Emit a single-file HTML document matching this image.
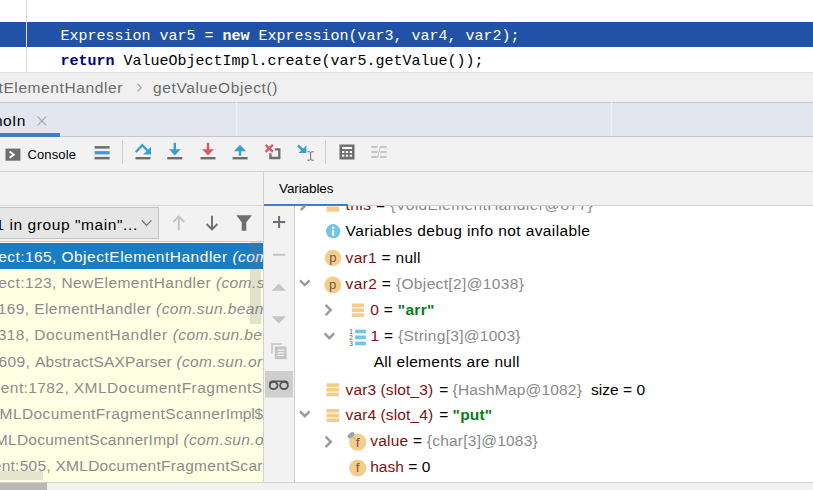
<!DOCTYPE html>
<html><head><meta charset="utf-8">
<style>
html,body{margin:0;padding:0;}
body{width:813px;height:490px;overflow:hidden;position:relative;background:#f2f2f2;font-family:"Liberation Sans",sans-serif;font-size:15.5px;letter-spacing:0.39px;color:#000;}
.abs{position:absolute;}
.t{position:absolute;white-space:pre;line-height:20px;}
.mono{font-family:"Liberation Mono",monospace;font-size:15px;letter-spacing:0;}
.row{position:absolute;left:0;width:263px;height:26px;overflow:hidden;}
.n{color:#801010;}
.g{color:#8a8a8a;}
.s{color:#067d17;font-weight:bold;}
</style></head><body>
<!-- editor -->
<div class="abs" id="editor" style="left:0;top:0;width:813px;height:72px;background:#fff;"></div>
<div class="abs" style="left:26px;top:0;width:1px;height:72px;background:#d9d9d9;"></div>
<div class="abs" id="hl" style="left:0;top:22px;width:813px;height:25px;background:#2252a7;"></div>
<div class="abs" style="left:26px;top:22px;width:1px;height:25px;background:#dcdcdc;"></div>
<div class="t mono" style="left:60.5px;top:27px;color:#fff;">Expression var5 = <b>new</b> Expression(var3, var4, var2);</div>
<div class="t mono" style="left:60.5px;top:52px;color:#000;"><b style="color:#000080">return</b> ValueObjectImpl.create(var5.getValue());</div>
<!-- breadcrumb -->
<div class="abs" style="left:0;top:72px;width:813px;height:30px;background:#f0f0f0;border-top:1px solid #e4e4e4;box-sizing:border-box;"></div>
<div class="t" style="left:-1.5px;top:78px;color:#6a6a6a;letter-spacing:0.6px;">tElementHandler</div>
<div class="t" style="left:153px;top:78px;color:#6a6a6a;letter-spacing:0.62px;">getValueObject()</div>
<!-- tab bar -->
<div class="abs" style="left:0;top:102px;width:813px;height:35px;background:#e3e6ee;border-top:1px solid #c8c8c8;border-bottom:1px solid #c8c8c8;box-sizing:border-box;"></div>
<div class="abs" style="left:236px;top:102px;width:1px;height:34px;background:#f0f0f2;"></div>
<div class="abs" style="left:611px;top:102px;width:1px;height:34px;background:#f0f0f2;"></div>
<div class="t" style="left:-6px;top:111px;color:#000;">noIn</div>
<div class="abs" style="left:0;top:133px;width:60px;height:4px;background:#3e7dc8;"></div>
<!-- toolbar -->
<div class="abs" style="left:0;top:137px;width:813px;height:35px;background:#f2f2f2;border-bottom:1px solid #d1d1d1;box-sizing:border-box;"></div>
<div class="t" style="left:27.4px;top:145px;font-size:13px;letter-spacing:0.15px;">Console</div>
<!-- sub header -->
<div class="abs" style="left:0;top:172px;width:813px;height:34px;background:#f2f2f2;"></div>
<div class="abs" style="left:263px;top:172px;width:1px;height:310px;background:#d1d1d1;"></div>
<div class="t" style="left:279px;top:178.5px;font-size:13.5px;letter-spacing:-0.1px;">Variables</div>
<div class="abs" style="left:264px;top:205px;width:549px;height:1px;background:#d1d1d1;"></div>
<div class="abs" style="left:264px;top:204px;width:84px;height:2px;background:#3e7dc8;"></div>
<div class="abs" style="left:0;top:205px;width:263px;height:1px;background:#d8d8d8;"></div>
<!-- frames panel -->
<div class="abs" style="left:-5px;top:207px;width:164px;height:32px;border:1px solid #c4c4c4;background:#e6e6e6;box-sizing:border-box;"></div>
<div class="t" style="left:-4.6px;top:215px;letter-spacing:0.58px;">1 in group "main"...</div>
<div class="abs" style="left:0;top:241px;width:263px;height:1px;background:#cacaca;"></div>
<div class="abs" style="left:0;top:242px;width:263px;height:1px;background:#fafafa;"></div>
<div class="abs" style="left:0;top:243px;width:263px;height:239px;background:#ffffe4;"></div>
<div class="abs" style="left:0;top:243px;width:263px;height:26px;background:#1a7dc4;"></div>
<div class="abs" id="frames" style="left:0;top:242px;width:263px;height:240px;overflow:hidden;">
<div class="abs" style="left:0;top:5px;width:400px;height:20px;color:#fff;"><span class="t" style="left:-1.67px;top:0;letter-spacing:0.400px;">ect:165, </span><span class="t" style="left:61.40px;top:0;letter-spacing:0.517px;">ObjectElementHandler </span><span class="t" style="left:232.50px;top:0;letter-spacing:0.400px;font-style:italic">(com</span></div>
<div class="abs" style="left:0;top:31px;width:400px;height:20px;color:#8c8c8c;"><span class="t" style="left:-1.67px;top:0;letter-spacing:0.400px;">ect:123, </span><span class="t" style="left:61.40px;top:0;letter-spacing:0.446px;">NewElementHandler </span><span class="t" style="left:215.90px;top:0;letter-spacing:0.400px;font-style:italic">(com.s</span></div>
<div class="abs" style="left:0;top:57px;width:400px;height:20px;color:#8c8c8c;"><span class="t" style="left:-2.28px;top:0;letter-spacing:0.400px;">169, </span><span class="t" style="left:34.20px;top:0;letter-spacing:0.430px;">ElementHandler </span><span class="t" style="left:156.10px;top:0;letter-spacing:0.400px;font-style:italic">(com.sun.beans</span></div>
<div class="abs" style="left:0;top:83px;width:400px;height:20px;color:#8c8c8c;"><span class="t" style="left:-2.28px;top:0;letter-spacing:0.400px;">318, </span><span class="t" style="left:34.20px;top:0;letter-spacing:0.580px;">DocumentHandler </span><span class="t" style="left:172.70px;top:0;letter-spacing:0.400px;font-style:italic">(com.sun.bea</span></div>
<div class="abs" style="left:0;top:110px;width:400px;height:20px;color:#8c8c8c;"><span class="t" style="left:-1.48px;top:0;letter-spacing:0.400px;">609, </span><span class="t" style="left:35.00px;top:0;letter-spacing:0.200px;">AbstractSAXParser </span><span class="t" style="left:176.40px;top:0;letter-spacing:0.400px;font-style:italic">(com.sun.org</span></div>
<div class="abs" style="left:0;top:136px;width:400px;height:20px;color:#8c8c8c;"><span class="t" style="left:0.85px;top:0;letter-spacing:0.400px;">ent:1782, </span><span class="t" style="left:73.80px;top:0;letter-spacing:0.485px;">XMLDocumentFragmentS</span></div>
<div class="abs" style="left:0;top:162px;width:400px;height:20px;color:#8c8c8c;"><span class="t" style="left:-0.40px;top:0;letter-spacing:0.400px;">M</span><span class="t" style="left:12.90px;top:0;letter-spacing:0.400px;">LDocumentFragmentScanner</span><span class="t" style="left:225.80px;top:0;letter-spacing:-0.120px;">Impl</span><span class="t" style="left:254.60px;top:0;letter-spacing:0.000px;">$</span></div>
<div class="abs" style="left:0;top:188px;width:400px;height:20px;color:#8c8c8c;"><span class="t" style="left:-5.20px;top:0;letter-spacing:0.400px;">M</span><span class="t" style="left:8.10px;top:0;letter-spacing:0.220px;">LDocumentScannerImpl </span><span class="t" style="left:183.40px;top:0;letter-spacing:0.400px;font-style:italic">(com.sun.o</span></div>
<div class="abs" style="left:0;top:214px;width:400px;height:20px;color:#8c8c8c;"><span class="t" style="left:-7.20px;top:0;letter-spacing:0.250px;">ent:505, </span><span class="t" style="left:55.40px;top:0;letter-spacing:0.290px;">XMLDocumentFragmentScar</span></div>
</div>
<div class="abs" style="left:250px;top:242px;width:11px;height:82px;background:rgba(120,120,120,0.22);"></div>
<div class="abs" style="left:0;top:471px;width:43px;height:9px;background:rgba(120,120,120,0.2);"></div>
<!-- vertical toolbar -->
<div class="abs" style="left:264px;top:206px;width:30px;height:276px;background:#f2f2f2;"></div>
<div class="abs" style="left:294px;top:206px;width:1px;height:276px;background:#d1d1d1;"></div>
<!-- variables -->
<div class="abs" style="left:295px;top:206px;width:518px;height:276px;background:#fff;"></div>
<div class="abs" style="left:295px;top:206px;width:518px;height:14px;overflow:hidden;"><div class="t" style="left:50.6px;top:-11px;letter-spacing:0.4px;"><span class="n">this</span> = <span class="g">{VoidElementHandler@877}</span></div></div>
<div class="abs" style="left:0;top:221px;width:813px;height:20px;"><span class="t" style="left:345.60px;top:0;letter-spacing:0.390px;">Variables debug info not available</span></div>
<div class="abs" style="left:0;top:248px;width:813px;height:20px;"><span class="t" style="left:345.60px;top:0;letter-spacing:0.300px;"><span class="n">var1</span> = null</span></div>
<div class="abs" style="left:0;top:274px;width:813px;height:20px;"><span class="t" style="left:345.60px;top:0;letter-spacing:0.356px;"><span class="n">var2</span> = <span class="g">{Object[2]@1038}</span></span></div>
<div class="abs" style="left:0;top:300px;width:813px;height:20px;"><span class="t" style="left:370.20px;top:0;letter-spacing:0.310px;"><span class="n">0</span> = <span class="s">"arr"</span></span></div>
<div class="abs" style="left:0;top:326px;width:813px;height:20px;"><span class="t" style="left:370.60px;top:0;letter-spacing:0.280px;"><span class="n">1</span> = <span class="g">{String[3]@1003}</span></span></div>
<div class="abs" style="left:0;top:352px;width:813px;height:20px;"><span class="t" style="left:373.70px;top:0;letter-spacing:0.310px;">All elements are null</span></div>
<div class="abs" style="left:0;top:380px;width:813px;height:20px;"><span class="t n" style="left:345.60px;top:0;letter-spacing:0.110px;">var3 (slot_3)</span><span class="t" style="left:439.20px;top:0;letter-spacing:0.000px;">=</span><span class="t g" style="left:452.60px;top:0;letter-spacing:0.180px;">{HashMap@1082}</span><span class="t" style="left:591.00px;top:0;letter-spacing:0.030px;">size = 0</span></div>
<div class="abs" style="left:0;top:405px;width:813px;height:20px;"><span class="t n" style="left:345.60px;top:0;letter-spacing:0.110px;">var4 (slot_4)</span><span class="t" style="left:439.20px;top:0;letter-spacing:0.000px;">=</span><span class="t s" style="left:452.60px;top:0;letter-spacing:0.200px;">"put"</span></div>
<div class="abs" style="left:0;top:431px;width:813px;height:20px;"><span class="t" style="left:370.20px;top:0;letter-spacing:0.230px;"><span class="n">value</span> = <span class="g">{char[3]@1083}</span></span></div>
<div class="abs" style="left:0;top:457px;width:813px;height:20px;"><span class="t" style="left:370.20px;top:0;letter-spacing:0.050px;"><span class="n">hash</span> = 0</span></div>

<!-- icons overlay -->
<svg class="abs" style="left:0;top:0;pointer-events:none" width="813" height="490" viewBox="0 0 813 490">
<!-- breadcrumb chevron -->
<polyline points="137.6,83.8 141.2,87.6 137.6,91.4" fill="none" stroke="#9c9c9c" stroke-width="1.2"/>
<!-- tab close -->
<path d="M37.6 116.7 L46.2 125.3 M46.2 116.7 L37.6 125.3" stroke="#a0a3a9" stroke-width="1.1" fill="none"/>
<!-- console icon -->
<rect x="5.5" y="148.6" width="14.9" height="12.1" fill="#6e6e6e"/>
<polyline points="9.6,151.6 13.7,154.7 9.6,157.8" fill="none" stroke="#fff" stroke-width="1.9"/>
<!-- hamburger -->
<rect x="94.6" y="146.1" width="15" height="2.5" fill="#6e6e6e"/>
<rect x="94.6" y="151.1" width="15" height="3.3" fill="#389fd6"/>
<rect x="94.6" y="156.9" width="15" height="2.5" fill="#6e6e6e"/>
<!-- separators -->
<rect x="122" y="140" width="1" height="24" fill="#cfcfcf"/>
<rect x="325" y="140" width="1" height="24" fill="#cfcfcf"/>
<!-- step over -->
<rect x="135.5" y="157" width="15" height="2.4" fill="#6e6e6e"/>
<polyline points="135.8,152 142.3,145.2 147.5,150.6" fill="none" stroke="#389fd6" stroke-width="2.3"/>
<polygon points="151,146.8 151,154.5 143.2,154.5" fill="#389fd6"/>
<!-- step into -->
<rect x="167.3" y="157" width="15" height="2.4" fill="#6e6e6e"/>
<rect x="173.6" y="142.8" width="2.4" height="8" fill="#389fd6"/>
<polygon points="169,149.3 180.6,149.3 174.8,155.4" fill="#389fd6"/>
<!-- force step into -->
<rect x="200.5" y="157" width="15" height="2.4" fill="#6e6e6e"/>
<rect x="206.8" y="142.8" width="2.4" height="8" fill="#db5860"/>
<polygon points="202.2,149.3 213.8,149.3 208,155.4" fill="#db5860"/>
<!-- step out -->
<rect x="232.6" y="157" width="15" height="2.4" fill="#6e6e6e"/>
<rect x="238.8" y="149" width="2.4" height="6.8" fill="#389fd6"/>
<polygon points="234,151.2 246,151.2 240,144.8" fill="#389fd6"/>
<!-- drop frame -->
<path d="M274.7 149.4 H279.3 V158 H270.4 V153.2" fill="none" stroke="#6e6e6e" stroke-width="2.3"/>
<path d="M265.6 144.9 L272.9 151.8 M272.9 144.9 L265.6 151.8" stroke="#db5860" stroke-width="2.4" fill="none"/>
<!-- run to cursor -->
<path d="M298 145.4 L303.4 150.6" stroke="#389fd6" stroke-width="2.5" fill="none"/>
<polygon points="306.4,145.6 306.4,152.9 298.4,152.9" fill="#389fd6"/>
<path d="M307.4 151.8 H309.4 Q310.6 151.8 310.6 153 V159 Q310.6 160.2 309.4 160.2 H307.4 M313.8 151.8 H311.8 Q310.6 151.8 310.6 153 M310.6 159 Q310.6 160.2 311.8 160.2 H313.8" stroke="#6e6e6e" stroke-width="1" fill="none"/>
<!-- calculator -->
<rect x="339.5" y="144.5" width="15" height="15" fill="#6e6e6e"/>
<rect x="342" y="146.9" width="10" height="2.1" fill="#fff"/>
<g fill="#fff">
<rect x="342" y="151" width="2.3" height="2"/><rect x="345.9" y="151" width="2.2" height="2"/><rect x="349.7" y="151" width="2.3" height="2"/>
<rect x="342" y="154.7" width="2.3" height="2"/><rect x="345.9" y="154.7" width="2.2" height="2"/><rect x="349.7" y="154.7" width="2.3" height="2"/>
</g>
<!-- trace (disabled) -->
<g fill="#c2c2c2">
<rect x="371.3" y="145.9" width="6.4" height="1.9"/><rect x="371.3" y="151" width="6.4" height="1.9"/><rect x="371.3" y="156.1" width="6.4" height="1.9"/>
<rect x="380.2" y="145.9" width="6.4" height="1.9"/><rect x="380.2" y="151" width="6.4" height="1.9"/><rect x="380.2" y="156.1" width="6.4" height="1.9"/>
</g>
<path d="M377.6 157.4 L380.4 146.3" stroke="#c6c6c6" stroke-width="1" fill="none"/>
<!-- frames toolbar -->
<polyline points="141.8,220.4 146.6,225.4 151.4,220.4" fill="none" stroke="#6e6e6e" stroke-width="1.3"/>
<path d="M178.8 230.2 V217 M173.4 222 L178.8 216.6 L184.2 222" fill="none" stroke="#c2c2c2" stroke-width="1.9"/>
<path d="M212 215.8 V229 M206.6 224 L212 229.4 L217.4 224" fill="none" stroke="#6e6e6e" stroke-width="1.9"/>
<path d="M236.3 215.3 H252 L246.3 222.2 V230.7 H241.7 V222.2 Z" fill="#6e6e6e"/>
<!-- vertical toolbar -->
<path d="M273 222 H285.2 M279.1 216 V228" stroke="#6e6e6e" stroke-width="2" fill="none"/>
<rect x="273" y="253.8" width="12.2" height="2" fill="#c4c4c4"/>
<polygon points="271.7,290.7 286,290.7 278.85,283.6" fill="#c4c4c4"/>
<polygon points="271.7,316.3 286,316.3 278.85,323.5" fill="#c4c4c4"/>
<!-- copy -->
<path d="M272 353.5 V344 H282" fill="none" stroke="#c4c4c4" stroke-width="1.6"/>
<rect x="274.8" y="346.5" width="11.8" height="12.7" fill="#c4c4c4"/>
<g fill="#f2f2f2"><rect x="277.5" y="349.5" width="6.6" height="1.3"/><rect x="277.5" y="352.2" width="6.6" height="1.3"/><rect x="277.5" y="354.9" width="6.6" height="1.3"/></g>
<!-- glasses -->
<rect x="265" y="371" width="28" height="26.5" fill="#cfcfcf"/>
<ellipse cx="273.6" cy="385.4" rx="3.9" ry="3.6" fill="none" stroke="#555" stroke-width="1.9"/>
<ellipse cx="284" cy="385.4" rx="3.9" ry="3.6" fill="none" stroke="#555" stroke-width="1.9"/>
<path d="M269.6 383.5 Q270 381.3 272.5 381.2 H285.1 Q287.6 381.3 288 383.5" fill="none" stroke="#555" stroke-width="1.5"/>
<!-- tree icons -->
<g id="treeicons">
<path d="M304.9 206 L300.7 210.2" stroke="#9c9c9c" stroke-width="2.5" fill="none"/>
<rect x="326.6" y="206.6" width="12.4" height="5.1" fill="#f7cb8b"/>
<!-- info -->
<circle cx="333.1" cy="231.2" r="7.1" fill="#70c4e8"/>
<rect x="332" y="226.6" width="2.2" height="2.2" fill="#fff"/><rect x="332" y="229.8" width="2.2" height="5.8" fill="#fff"/>
<!-- p icons -->
<circle cx="333" cy="258" r="8.3" fill="#f7cb8b"/>
<circle cx="332.8" cy="285" r="8.4" fill="#f7cb8b"/>
<!-- chevrons -->
<polyline points="300,280.3 304.8,285.1 309.6,280.3" fill="none" stroke="#9c9c9c" stroke-width="2.5"/>
<polyline points="325.6,304.8 330.8,310 325.6,315.2" fill="none" stroke="#9c9c9c" stroke-width="2.5"/>
<polyline points="324.6,333.4 329.4,338.2 334.2,333.4" fill="none" stroke="#9c9c9c" stroke-width="2.5"/>
<polyline points="300,411.4 304.8,416.2 309.6,411.4" fill="none" stroke="#9c9c9c" stroke-width="2.5"/>
<polyline points="325.6,436.6 330.8,441.8 325.6,447" fill="none" stroke="#9c9c9c" stroke-width="2.5"/>
<!-- array icon row 0 -->
<g fill="#f7cb8b"><rect x="351.8" y="303.5" width="12.2" height="3.7"/><rect x="351.8" y="308.4" width="12.2" height="3.7"/><rect x="351.8" y="313.3" width="12.2" height="3.7"/></g>
<!-- numbered list icon -->
<g fill="#73c4e8"><rect x="355.1" y="329.6" width="10.8" height="3.7"/><rect x="355.1" y="335.5" width="10.8" height="3.8"/><rect x="355.1" y="341.6" width="10.8" height="3.7"/></g>
<!-- var3/var4 icons -->
<g fill="#f7cb8b"><rect x="326.4" y="383.3" width="12.6" height="3.6"/><rect x="326.4" y="388" width="12.6" height="3.6"/><rect x="326.4" y="392.7" width="12.6" height="3.6"/></g>
<g fill="#f7cb8b"><rect x="326.4" y="409" width="12.6" height="3.6"/><rect x="326.4" y="413.7" width="12.6" height="3.6"/><rect x="326.4" y="418.4" width="12.6" height="3.6"/></g>
<!-- f icons -->
<circle cx="357.7" cy="442.2" r="8.6" fill="#f7cb8b"/>
<circle cx="357.7" cy="468" r="8.6" fill="#f7cb8b"/>
<!-- pin -->
<ellipse cx="351" cy="435.2" rx="3.9" ry="2.3" transform="rotate(-40 351 435.2)" fill="#9aa7b0"/>
<path d="M352.5 436.6 L355.2 439" stroke="#9aa7b0" stroke-width="1"/>
</g>
<g font-family="Liberation Sans, sans-serif" fill="#6a5a49" text-anchor="middle">
<text x="333" y="262" font-size="13">p</text>
<text x="332.8" y="288.8" font-size="13">p</text>
<text x="357.9" y="446.6" font-size="13.5">f</text>
<text x="357.9" y="472.4" font-size="13.5">f</text>
<text x="351.2" y="334.2" font-size="6.5" fill="#555">1</text>
<text x="351.2" y="340.2" font-size="6.5" fill="#555">2</text>
<text x="351.2" y="346.2" font-size="6.5" fill="#555">3</text>
</g>
</svg>
<!-- bottom -->
<div class="abs" style="left:0;top:482px;width:813px;height:8px;background:#f2f2f2;border-top:1px solid #d1d1d1;box-sizing:border-box;"></div>
<div class="abs" style="left:0;top:483px;width:47px;height:7px;background:#b8b8b8;"></div>
</body></html>
